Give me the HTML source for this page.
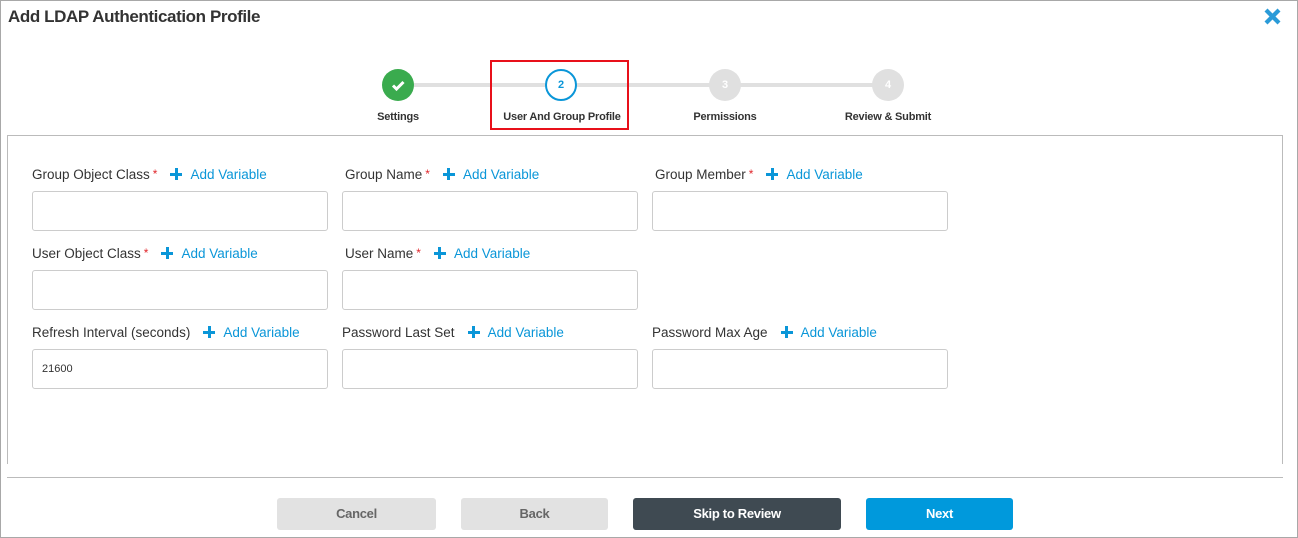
<!DOCTYPE html>
<html><head><style>
body{margin:0;width:1298px;height:538px;position:relative;background:#fff;font-family:"Liberation Sans",sans-serif;overflow:hidden}
.a{position:absolute}
.lbl{position:absolute;font-size:13.5px;color:#333;white-space:nowrap}
.lbl .r{color:#e0262b;font-size:12px;margin-left:3px;position:relative;top:-1px}
.lbl .av{color:#0a96d8;margin-left:13px}
.lbl .p{display:inline-block;position:relative;width:12px;height:12px;vertical-align:-1px;margin-right:8px}
.lbl .p:before{content:"";position:absolute;left:4.5px;top:0;width:3px;height:12px;background:#0a96d8}
.lbl .p:after{content:"";position:absolute;left:0;top:4.5px;width:12px;height:3px;background:#0a96d8}
.in{position:absolute;width:294px;height:38px;border:1px solid #ccc;border-radius:3px;background:#fff;font-size:11px;color:#333}
.step{position:absolute;width:32px;height:32px;border-radius:50%;background:#e0e0e0;color:#fff;font-size:11px;font-weight:bold;text-align:center;line-height:32px}
.sl{position:absolute;font-size:11px;color:#333;top:111px;white-space:nowrap;transform:translateX(-50%);font-weight:bold;letter-spacing:-0.2px}
.btn{position:absolute;top:498px;height:32px;border-radius:3px;font-size:13px;font-weight:bold;text-align:center;line-height:32px;letter-spacing:-0.3px}
</style></head><body>
<div class="a" style="left:0;top:0;width:1296px;height:536px;border:1px solid #a8a8a8"></div>
<div class="a" style="left:8px;top:7px;font-size:17px;font-weight:bold;color:#333;letter-spacing:-0.4px">Add LDAP Authentication Profile</div>
<svg class="a" style="left:1264px;top:8px" width="17" height="17" viewBox="0 0 17 17"><path d="M2 2L15 15M15 2L2 15" stroke="#2a9bd8" stroke-width="4.2"/></svg>
<div class="a" style="left:398px;top:83px;width:490px;height:4px;background:#e0e0e0"></div>
<div class="step" style="left:382px;top:69px;background:#3aab4e"><svg width="32" height="32" viewBox="0 0 32 32"><path d="M11 16.5l3.5 3.5 7-7" stroke="#fff" stroke-width="3" fill="none"/></svg></div>
<div class="step" style="left:545px;top:69px;background:#fff;border:2px solid #0a96d8;width:28px;height:28px;line-height:28px;color:#0a96d8">2</div>
<div class="step" style="left:709px;top:69px">3</div>
<div class="step" style="left:872px;top:69px">4</div>
<div class="sl" style="left:398px">Settings</div>
<div class="sl" style="left:562px">User And Group Profile</div>
<div class="sl" style="left:725px">Permissions</div>
<div class="sl" style="left:888px">Review &amp; Submit</div>
<div class="a" style="left:490px;top:60px;width:135px;height:66px;border:2px solid #e8101a"></div>
<div class="a" style="left:7px;top:135px;width:1274px;height:328px;border:1px solid #bbb;border-bottom:none"></div>
<div class="a" style="left:7px;top:477px;width:1276px;height:1px;background:#bbb"></div>

<div class="lbl" style="left:32px;top:167px">Group Object Class<span class="r">*</span><span class="av"><span class="p"></span>Add Variable</span></div>
<div class="lbl" style="left:345px;top:167px">Group Name<span class="r">*</span><span class="av"><span class="p"></span>Add Variable</span></div>
<div class="lbl" style="left:655px;top:167px">Group Member<span class="r">*</span><span class="av"><span class="p"></span>Add Variable</span></div>
<div class="in" style="left:32px;top:191px"></div>
<div class="in" style="left:342px;top:191px"></div>
<div class="in" style="left:652px;top:191px"></div>

<div class="lbl" style="left:32px;top:246px">User Object Class<span class="r">*</span><span class="av"><span class="p"></span>Add Variable</span></div>
<div class="lbl" style="left:345px;top:246px">User Name<span class="r">*</span><span class="av"><span class="p"></span>Add Variable</span></div>
<div class="in" style="left:32px;top:270px"></div>
<div class="in" style="left:342px;top:270px"></div>

<div class="lbl" style="left:32px;top:325px">Refresh Interval (seconds)<span class="av"><span class="p"></span>Add Variable</span></div>
<div class="lbl" style="left:342px;top:325px">Password Last Set<span class="av"><span class="p"></span>Add Variable</span></div>
<div class="lbl" style="left:652px;top:325px">Password Max Age<span class="av"><span class="p"></span>Add Variable</span></div>
<div class="in" style="left:32px;top:349px;line-height:38px;text-indent:9px">21600</div>
<div class="in" style="left:342px;top:349px"></div>
<div class="in" style="left:652px;top:349px"></div>

<div class="btn" style="left:277px;width:159px;background:#e2e2e2;color:#666">Cancel</div>
<div class="btn" style="left:461px;width:147px;background:#e2e2e2;color:#666">Back</div>
<div class="btn" style="left:633px;width:208px;background:#3f4a52;color:#fff">Skip to Review</div>
<div class="btn" style="left:866px;width:147px;background:#0099dc;color:#fff">Next</div>
</body></html>
